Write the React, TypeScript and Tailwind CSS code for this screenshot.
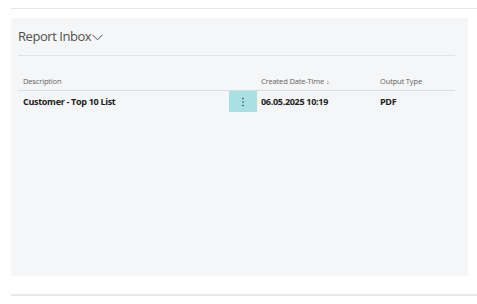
import React from 'react';

const App: React.FC = () => {
  return (
    <div className="w-[477px] h-[304px] bg-white pl-[11px] pt-[8px] font-['Segoe_UI','Open_Sans',sans-serif] text-[#212121]">
      <div className="h-px bg-[#e6e6e6]" />
      <div className="mt-[9px] mr-[9px] h-[258px] bg-[#f5f6f7] px-[7px]">
        <div className="flex items-center h-[38px] border-b border-[#e1e1e1] mr-[6px]">
          <span className="text-[13px] text-[#505050] tracking-[-0.45px]">Report Inbox</span>
          <svg width="11" height="7" viewBox="0 0 11 7" className="ml-[1px] mt-[2px]">
            <path d="M0.5 0.8 L5.5 5.8 L10.5 0.8" fill="none" stroke="#505050" strokeWidth="1" />
          </svg>
        </div>
        <div className="mr-[6px] mt-[18px]">
          <div className="flex h-[17px] items-center border-b border-[#dcdcdc] text-[7.5px] tracking-[-0.15px] text-[#616161]">
            <div className="w-[243px] pl-[5px]">Description</div>
            <div className="w-[119px]">Created Date-Time ↓</div>
            <div>Output Type</div>
          </div>
          <div className="flex h-[21px] items-center text-[9px] tracking-[-0.3px] font-bold">
            <div className="w-[211px] pl-[5px]">Customer - Top 10 List</div>
            <div className="w-[28px] h-full bg-[#a9e0e4] flex items-center justify-center">
              <svg width="2" height="10" viewBox="0 0 2 10">
                <circle cx="1" cy="1.5" r="0.8" fill="#3a3a3a" />
                <circle cx="1" cy="5" r="0.8" fill="#3a3a3a" />
                <circle cx="1" cy="8.5" r="0.8" fill="#3a3a3a" />
              </svg>
            </div>
            <div className="w-[123px] pl-[4px]">06.05.2025 10:19</div>
            <div>PDF</div>
          </div>
        </div>
      </div>
      <div className="mt-[18px] h-[2px] bg-[#e8e8e8]" />
    </div>
  );
};

export default App;
